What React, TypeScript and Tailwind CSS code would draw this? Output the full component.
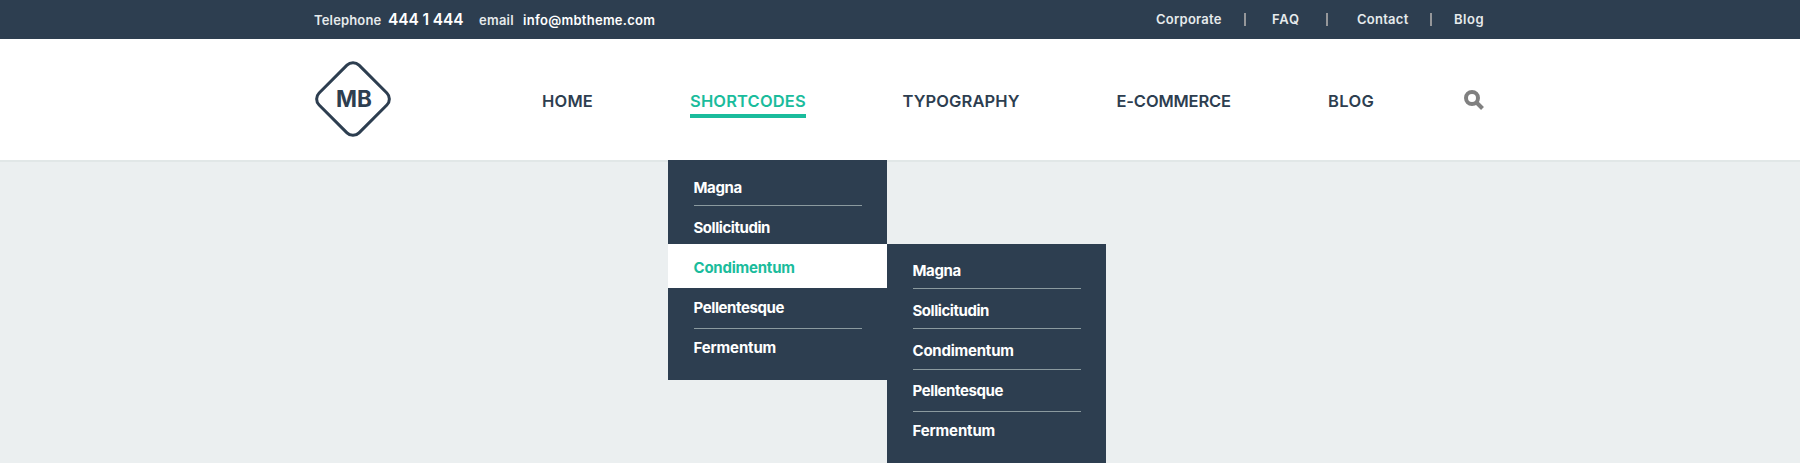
type Row = { label: string; row: string; track: string; line?: boolean };

const menu: Row[] = [
  { label: "Magna", row: "h-[46px] pt-[18px]", track: "tracking-[-0.4px]", line: true },
  { label: "Sollicitudin", row: "h-[38px] pt-[12px]", track: "tracking-[-0.45px]" },
  { label: "Condimentum", row: "h-[44px] pt-[14px] bg-white text-[#1abc9c]", track: "tracking-[-0.22px]" },
  { label: "Pellentesque", row: "h-[41px] pt-[10px]", track: "tracking-[-0.4px]", line: true },
  { label: "Fermentum", row: "h-[51px] pt-[9px]", track: "tracking-[-0.15px]" },
];

const submenu: Row[] = [
  { label: "Magna", row: "h-[45px] pt-[17px]", track: "tracking-[-0.4px]", line: true },
  { label: "Sollicitudin", row: "h-[40px] pt-[12px]", track: "tracking-[-0.45px]", line: true },
  { label: "Condimentum", row: "h-[41px] pt-[12px]", track: "tracking-[-0.22px]", line: true },
  { label: "Pellentesque", row: "h-[42px] pt-[11px]", track: "tracking-[-0.4px]", line: true },
  { label: "Fermentum", row: "h-[51px] pt-[9px]", track: "tracking-[-0.15px]" },
];

function Menu({ rows }: { rows: Row[] }) {
  return (
    <ul className="w-[219px] bg-[#2d3e50] text-[15px] leading-5 font-bold text-white">
      {rows.map((r) => (
        <li key={r.label} className={`flex flex-col justify-between pr-[25px] pl-[26px] ${r.row}`}>
          <a className={`-ml-[0.5px] self-start whitespace-nowrap ${r.track}`}>{r.label}</a>
          {r.line && <span className="h-px shrink-0 bg-[#8b9a9f]" />}
        </li>
      ))}
    </ul>
  );
}

function Divider() {
  return <span className="mt-1 h-[13px] w-[1.5px] bg-[#95979a]" />;
}

export default function App() {
  return (
    <div className="h-[463px] w-[1800px] overflow-hidden bg-[#ebeff0] font-['Inter',sans-serif]">
      <div className="flex h-[39px] bg-[#2d3e50] px-[314px] text-[13px] leading-5 font-semibold text-[#e6eaec]">
        <div className="flex w-[842px] pt-[10px]">
          <span className="w-[74px] tracking-[0.16px]">Telephone</span>
          <span className="w-[91px] text-[15.5px] tracking-[-0.1px] text-white">444 1 444</span>
          <span className="w-[44px] tracking-[0.25px]">email</span>
          <a className="tracking-[0.28px] text-white">info@mbtheme.com</a>
        </div>
        <div className="flex pt-[9px]">
          <a className="w-[88px] tracking-[0.25px]">Corporate</a>
          <Divider />
          <a className="ml-[26.5px] w-[54px] tracking-[0.8px]">FAQ</a>
          <Divider />
          <a className="ml-[29.5px] w-[73px] tracking-[0.25px]">Contact</a>
          <Divider />
          <a className="ml-[22.5px] tracking-[0.5px]">Blog</a>
        </div>
      </div>
      <header className="relative flex h-[123px] border-b-2 border-[#e1e7e7] bg-white pl-[314px] text-[#2d3e50]">
        <svg className="mt-[21px] h-[78px] w-[78px]" viewBox="0 0 78 78">
          <rect x="10.8" y="10.8" width="56.4" height="56.4" rx="8.5" transform="rotate(45 39 39)" fill="none" stroke="#2d3e50" strokeWidth="3" />
          <text x="40" y="47" textAnchor="middle" fontSize="22.5" fontWeight="700" fill="#2d3e50">MB</text>
        </svg>
        <nav className="flex items-start pt-[52px] pl-[150px] text-[16.5px] leading-5 font-semibold">
          <a className="w-[148px] tracking-[0.2px]">HOME</a>
          <a className="mr-[96.5px] w-[116px] border-b-4 border-[#1abc9c] pb-[3px] tracking-[0.15px] text-[#1abc9c]">SHORTCODES</a>
          <a className="w-[214px] tracking-[0.1px]">TYPOGRAPHY</a>
          <a className="w-[211.5px] tracking-[-0.15px]">E-COMMERCE</a>
          <a className="w-[136px] tracking-[0.35px]">BLOG</a>
        </nav>
        <svg className="mt-[51px] h-5 w-5" viewBox="0 0 20 20" fill="none" stroke="#808080" strokeWidth="4">
          <circle cx="8" cy="8" r="6" />
          <path d="M12 12L18.5 18.5" />
        </svg>
        <div className="absolute top-[121px] left-[668px] flex items-start">
          <Menu rows={menu} />
          <div className="mt-[84px]">
            <Menu rows={submenu} />
          </div>
        </div>
      </header>
    </div>
  );
}
